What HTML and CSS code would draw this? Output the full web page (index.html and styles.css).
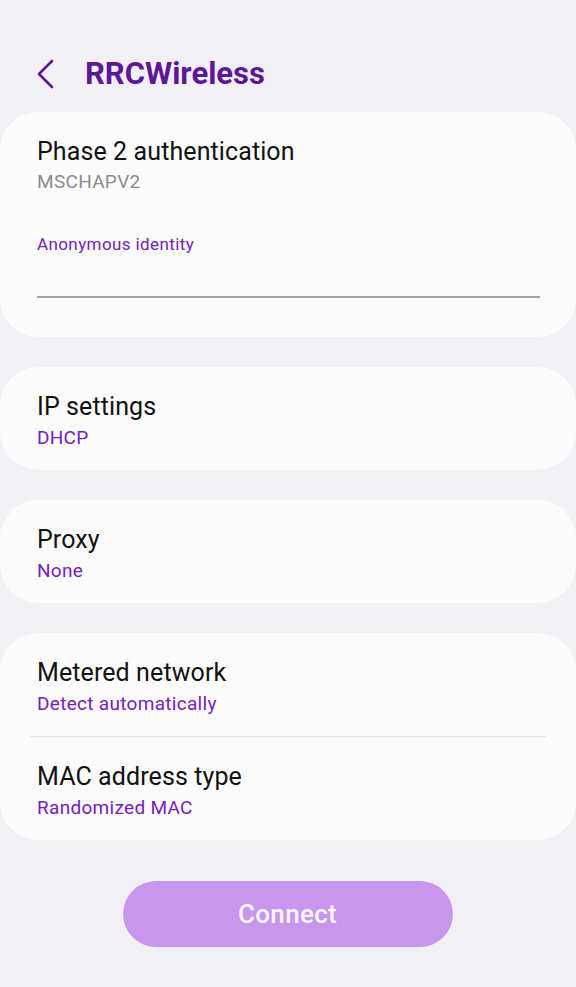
FILE: index.html
```html
<!DOCTYPE html>
<html lang="en">
<head>
<meta charset="utf-8">
<title>RRCWireless</title>
<link rel="stylesheet" href="styles.css">
</head>
<body>
<header class="app-bar">
  <svg class="back" width="20" height="32" viewBox="0 0 20 32" aria-hidden="true">
    <path d="M15 2 L2 15 L15 28" fill="none" stroke="#5c1898" stroke-width="2.6" stroke-linecap="round" stroke-linejoin="round"/>
  </svg>
  <h1 class="title">RRCWireless</h1>
</header>

<main class="content">
  <section class="card">
    <div class="row">
      <div class="row-title">Phase 2 authentication</div>
      <div class="row-sub muted">MSCHAPV2</div>
      <div class="field-label">Anonymous identity</div>
      <div class="field-input"></div>
    </div>
  </section>

  <section class="card">
    <div class="row">
      <div class="row-title">IP settings</div>
      <div class="row-sub">DHCP</div>
    </div>
  </section>

  <section class="card">
    <div class="row">
      <div class="row-title">Proxy</div>
      <div class="row-sub">None</div>
    </div>
  </section>

  <section class="card">
    <div class="row">
      <div class="row-title">Metered network</div>
      <div class="row-sub">Detect automatically</div>
    </div>
    <div class="divider"></div>
    <div class="row">
      <div class="row-title">MAC address type</div>
      <div class="row-sub">Randomized MAC</div>
    </div>
  </section>

  <div class="actions">
    <button class="connect" type="button">Connect</button>
  </div>
</main>
</body>
</html>
```

FILE: styles.css
```css
html, body {
  margin: 0;
  padding: 0;
}

body {
  background: #f3f0f5;
  font-family: Roboto, "Noto Sans", "Liberation Sans", sans-serif;
  color: #101010;
  width: 576px;
  min-height: 987px;
}

.app-bar {
  display: flex;
  align-items: center;
  height: 40px;
  padding: 54px 0 18px 37px;
}

.back {
  display: block;
  width: 20px;
  height: 32px;
  margin-top: 1px;
}

.title {
  margin: 0 0 0 28px;
  font-size: 31px;
  line-height: 40px;
  font-weight: 700;
  color: #5c1898;
}

.content {
  display: flex;
  flex-direction: column;
  gap: 30px;
}

.card {
  background: #fcfcfc;
  border-radius: 38px;
}

.row {
  padding: 24px 36px 20px 37px;
}

.row-title {
  font-size: 25px;
  line-height: 32px;
  color: #111111;
  letter-spacing: 0.1px;
}

.row-sub {
  margin-top: 3px;
  font-size: 19px;
  line-height: 24px;
  letter-spacing: 0.3px;
  color: #7420c2;
}

.row-sub.muted {
  margin-top: 2px;
  color: #8c8c8c;
}

.field-label {
  margin-top: 39px;
  font-size: 17px;
  line-height: 22px;
  letter-spacing: 0.4px;
  color: #7420c2;
}

.field-input {
  height: 41px;
  border-bottom: 2px solid #a2a2a2;
  margin-bottom: 19px;
}

.divider {
  height: 1px;
  margin: 0 30px;
  background: #e3e1e5;
}

.actions {
  display: flex;
  justify-content: center;
  padding: 11px 0 0;
}

.connect {
  width: 330px;
  height: 66px;
  margin-left: -1px;
  border: none;
  border-radius: 33px;
  background: #c896ec;
  color: #fbf5ff;
  font-family: Roboto, "Noto Sans", "Liberation Sans", sans-serif;
  font-size: 26px;
  font-weight: 500;
  letter-spacing: 0.3px;
  padding: 0;
}
```
